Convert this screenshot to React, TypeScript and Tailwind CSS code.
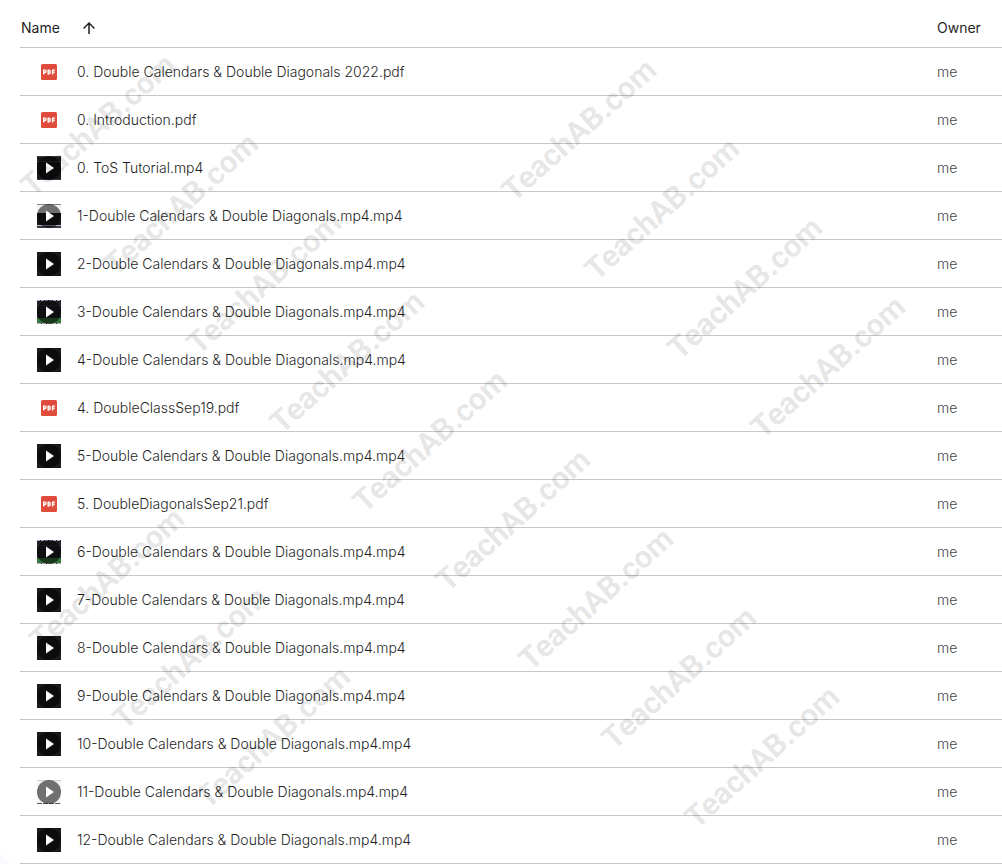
import { useState } from "react";
import { MdArrowUpward } from "react-icons/md";

type Thumb = "pdf" | "dark" | "tutorial" | "player" | "field" | "slide";

const files: { name: string; thumb: Thumb }[] = [
  { name: "0. Double Calendars & Double Diagonals 2022.pdf", thumb: "pdf" },
  { name: "0. Introduction.pdf", thumb: "pdf" },
  { name: "0. ToS Tutorial.mp4", thumb: "tutorial" },
  { name: "1-Double Calendars & Double Diagonals.mp4.mp4", thumb: "player" },
  { name: "2-Double Calendars & Double Diagonals.mp4.mp4", thumb: "dark" },
  { name: "3-Double Calendars & Double Diagonals.mp4.mp4", thumb: "field" },
  { name: "4-Double Calendars & Double Diagonals.mp4.mp4", thumb: "dark" },
  { name: "4. DoubleClassSep19.pdf", thumb: "pdf" },
  { name: "5-Double Calendars & Double Diagonals.mp4.mp4", thumb: "dark" },
  { name: "5. DoubleDiagonalsSep21.pdf", thumb: "pdf" },
  { name: "6-Double Calendars & Double Diagonals.mp4.mp4", thumb: "field" },
  { name: "7-Double Calendars & Double Diagonals.mp4.mp4", thumb: "dark" },
  { name: "8-Double Calendars & Double Diagonals.mp4.mp4", thumb: "dark" },
  { name: "9-Double Calendars & Double Diagonals.mp4.mp4", thumb: "dark" },
  { name: "10-Double Calendars & Double Diagonals.mp4.mp4", thumb: "dark" },
  { name: "11-Double Calendars & Double Diagonals.mp4.mp4", thumb: "slide" },
  { name: "12-Double Calendars & Double Diagonals.mp4.mp4", thumb: "dark" },
];

// Each run steps down and to the right from its first mark.
const runs = [
  { x: 98, y: 125, count: 9 },
  { x: 579, y: 130, count: 4 },
  { x: 107, y: 579, count: 3 },
];

const marks = runs.flatMap(({ x, y, count }) =>
  Array.from({ length: count }, (_, i) => ({ x: x + i * 83, y: y + i * 79 }))
);

const PdfIcon = () => (
  <svg viewBox="0 0 16 16" className="w-4 h-4 mx-1" aria-hidden="true">
    <rect width="16" height="16" rx="1.5" fill="#e04c3c" />
    <g fill="none" stroke="#fff" strokeWidth="1.4">
      <path d="M2.7 10.5V6.1h1.2a1.1 1.1 0 0 1 0 2.4H2.7" />
      <path d="M7.2 6.1v3.8h.7a1.3 1.3 0 0 0 1.3-1.3V7.4a1.3 1.3 0 0 0-1.3-1.3z" />
      <path d="M11.6 10.5V6.1h2.4M11.6 8.3h2" />
    </g>
  </svg>
);

const frames = {
  dark: <rect width="24" height="24" fill="#1b1b1b" />,
  tutorial: (
    <>
      <rect width="24" height="24" fill="#1a1a1e" />
      <path d="M0 .5h24M0 5.5h24" stroke="#3c3c40" />
      <path d="M0 23.5h24" stroke="#4a4a5c" strokeDasharray="2 1" />
    </>
  ),
  player: (
    <>
      <rect width="24" height="24" fill="#f4f2f4" />
      <path d="M0 .5h24" stroke="#8a7c86" />
      <path d="M0 9h24v12H0z" fill="#1c1c22" />
      <path d="M0 21.5h24" stroke="#b9b9c6" />
      <path d="M0 22h24v2H0z" fill="#3a3a42" />
    </>
  ),
  field: (
    <>
      <rect width="24" height="24" fill="#1f2126" />
      <path d="M0 .5h24" stroke="#a9a2c4" strokeDasharray="3 1" />
      <path d="M0 5.5h24" stroke="#35354a" />
      <path d="M0 18h24v5H0z" fill="#35783f" />
      <path d="M0 23.5h24" stroke="#b5b5b5" strokeDasharray="4 1" />
    </>
  ),
  slide: (
    <>
      <rect width="24" height="24" fill="#f5f3f5" />
      <path d="M0 .5h24" stroke="#d9c9dc" />
      <path d="M0 23.5h24" stroke="#4e5a5c" strokeDasharray="5 1" />
    </>
  ),
};

const VideoThumb = ({ kind }: { kind: keyof typeof frames }) => (
  <svg viewBox="0 0 24 24" className="w-6 h-6" aria-hidden="true">
    {frames[kind]}
    <circle cx="12" cy="12" r="12" fillOpacity="0.54" />
    <path d="M9 6.5v11l8-5.5z" fill="#fff" />
  </svg>
);

const Watermark = () => (
  <div
    aria-hidden="true"
    className="absolute inset-0 overflow-hidden pointer-events-none select-none"
  >
    {marks.map(({ x, y }) => (
      <span
        key={`${x}-${y}`}
        style={{ left: x, top: y }}
        className="absolute -translate-x-1/2 -translate-y-1/2 -rotate-[42deg] text-[31px] leading-none font-bold font-[Roboto,sans-serif] text-black/11"
      >
        TeachAB.com
      </span>
    ))}
  </div>
);

const App = () => {
  const [ascending, setAscending] = useState(true);
  const rows = ascending ? files : [...files].reverse();

  return (
    <div className="bg-[#f8fafd] font-[Inter,sans-serif]">
      <main className="relative bg-white rounded-bl-2xl pl-5">
        <table className="w-full table-fixed border-separate border-spacing-0 text-left text-sm">
          <thead>
            <tr>
              <th className="h-12 p-0 pt-2 pl-px border-b border-[#c7c7c7] font-normal text-[#1f1f1f]">
                <button
                  type="button"
                  onClick={() => setAscending(!ascending)}
                  className="flex items-center gap-5"
                >
                  Name
                  <MdArrowUpward
                    size={18}
                    className={ascending ? "" : "rotate-180"}
                  />
                </button>
              </th>
              <th className="w-[65px] h-12 p-0 pt-2 border-b border-[#c7c7c7] font-normal text-[#1f1f1f]">
                Owner
              </th>
            </tr>
          </thead>
          <tbody>
            {rows.map(({ name, thumb }) => (
              <tr key={name}>
                <td className="h-12 p-0 pl-[17px] border-b border-[#c7c7c7] text-[#1f1f1f] font-light">
                  <div className="flex items-center gap-4">
                    {thumb === "pdf" ? <PdfIcon /> : <VideoThumb kind={thumb} />}
                    {name}
                  </div>
                </td>
                <td className="h-12 p-0 border-b border-[#c7c7c7] text-[#444746] font-light">
                  me
                </td>
              </tr>
            ))}
          </tbody>
        </table>
        <Watermark />
      </main>
    </div>
  );
};

export default App;
